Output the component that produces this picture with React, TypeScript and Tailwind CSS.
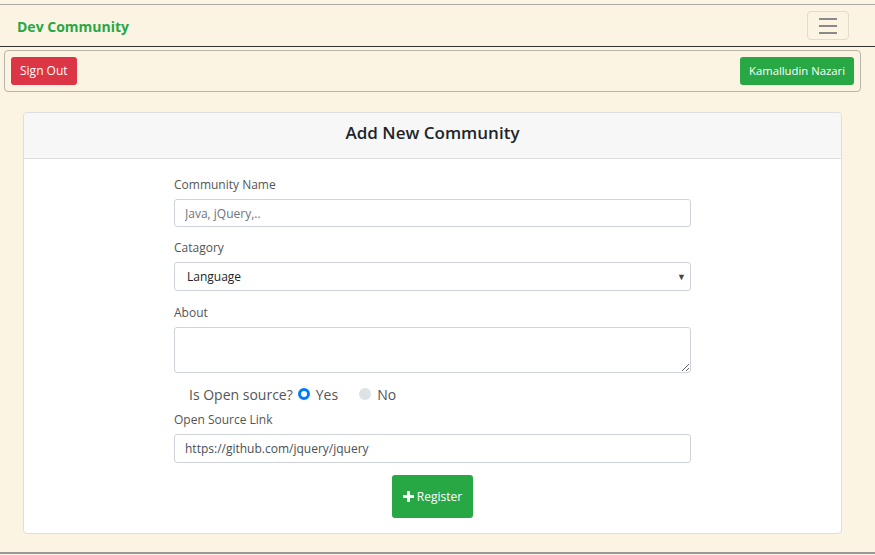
import { useState } from "react";

export default function App() {
  const [openSource, setOpenSource] = useState("yes");

  return (
    <main className="min-h-[555px] bg-[#fcf4e2] pt-[4px] text-[#212529] [font-family:'Open_Sans',sans-serif]">
      <div className="border-t border-[#a9a9a9]">
        {/* Navbar */}
        <nav className="h-[42px] flex items-center justify-between pl-[17px] pr-[26px] border-b border-[#333]">
          <span className="text-[14px] font-bold text-[#28a745] mt-[2px]">Dev Community</span>
          <button className="w-[42px] h-[29px] border border-[#e3dccb] rounded flex flex-col items-center justify-center gap-[5px]">
            <span className="block w-[18px] h-[2px] bg-[#8a8a8a]" />
            <span className="block w-[18px] h-[2px] bg-[#8a8a8a]" />
            <span className="block w-[18px] h-[2px] bg-[#8a8a8a]" />
          </button>
        </nav>

        {/* User bar */}
        <div className="mt-[3px] ml-[4px] mr-[14px] h-[42px] border border-[#b9b4a8] rounded-[4px] flex items-center justify-between px-[6px]">
          <button className="h-[28px] px-[9px] rounded-[3px] bg-[#dc3545] text-white text-[12px]">Sign Out</button>
          <button className="h-[28px] px-[9px] rounded-[3px] bg-[#28a745] text-white text-[11.3px]">Kamalludin Nazari</button>
        </div>

        {/* Card */}
        <div className="mt-[20px] ml-[23px] mr-[33px] bg-white border border-[#dedede] rounded-[4px]">
          <div className="h-[46px] bg-[#f7f7f7] border-b border-[#dedede] flex items-center justify-center rounded-t-[4px] pb-[5px]">
            <h1 className="text-[17px] font-semibold text-[#212529]">Add New Community</h1>
          </div>

          <form className="w-[517px] mx-auto pt-[17px] pb-[15px]" onSubmit={(e) => e.preventDefault()}>
            <label className="block text-[12px] text-[#555] mb-[5px]">Community Name</label>
            <input
              className="block w-full h-[28px] border border-[#ced4da] rounded-[3px] px-[10px] text-[12px] placeholder:text-[#6c757d] outline-none"
              placeholder="Java, jQuery,.."
            />

            <label className="block text-[12px] text-[#555] mt-[12px] mb-[5px]">Catagory</label>
            <div className="relative">
              <select className="block w-full h-[29px] border border-[#ced4da] rounded-[3px] px-[12px] text-[12px] appearance-none bg-white outline-none">
                <option>Language</option>
                <option>Framework</option>
                <option>Library</option>
              </select>
              <span className="absolute right-[5px] top-[8px] text-[9px] text-[#444]">▼</span>
            </div>

            <label className="block text-[12px] text-[#555] mt-[13px] mb-[5px]">About</label>
            <textarea className="block w-full h-[46px] border border-[#ced4da] rounded-[3px] px-[10px] py-[4px] text-[12px] outline-none" />

            <div className="flex items-center h-[28px] mt-[7px] pl-[15px] text-[14px] text-[#555]">
              <span>Is Open source?</span>
              <label className="flex items-center ml-[5px] cursor-pointer" onClick={() => setOpenSource("yes")}>
                <span className={`w-[12px] h-[12px] rounded-full ${openSource === "yes" ? "border-[3px] border-[#007bff] bg-white" : "bg-[#dee2e6]"}`} />
                <span className="ml-[6px]">Yes</span>
              </label>
              <label className="flex items-center ml-[21px] cursor-pointer" onClick={() => setOpenSource("no")}>
                <span className={`w-[12px] h-[12px] rounded-full ${openSource === "no" ? "border-[3px] border-[#007bff] bg-white" : "bg-[#dee2e6]"}`} />
                <span className="ml-[6px]">No</span>
              </label>
            </div>

            <label className="block text-[12px] text-[#555] mt-[3px] mb-[5px]">Open Source Link</label>
            <input
              className="block w-full h-[29px] border border-[#ced4da] rounded-[3px] px-[10px] text-[12px] text-[#495057] outline-none"
              defaultValue="https://github.com/jquery/jquery"
            />

            <div className="flex justify-center mt-[12px]">
              <button className="h-[43px] w-[81px] rounded-[3px] bg-[#28a745] text-white text-[12px] flex items-center justify-center gap-[3px]">
                <svg width="11" height="11" viewBox="0 0 11 11" fill="white">
                  <rect x="4" y="0" width="3" height="11" />
                  <rect x="0" y="4" width="11" height="3" />
                </svg>
                Register
              </button>
            </div>
          </form>
        </div>

        <div className="h-[18px]" />
        <div className="border-b-2 border-[#999]" />
      </div>
    </main>
  );
}
